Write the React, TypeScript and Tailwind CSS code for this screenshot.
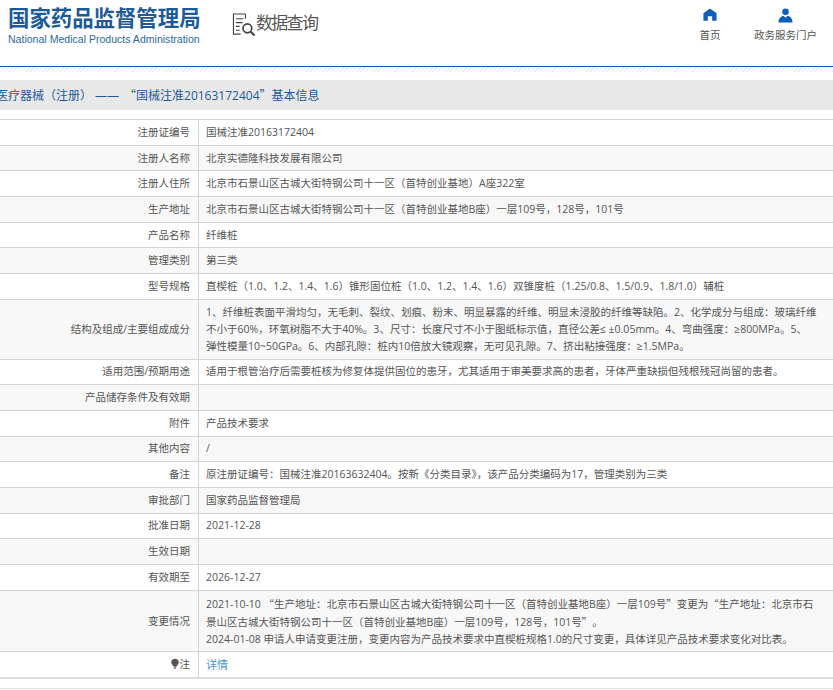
type Row = { label: string; value?: React.ReactNode[]; link?: boolean; bulb?: boolean };

function Q({ children }: { children: string }) {
  return <span className="inline-block [font-family:'Noto_Sans_CJK_SC',sans-serif]">{children}</span>;
}

const rows: Row[] = [
  { label: "注册证编号", value: ["国械注准20163172404"] },
  { label: "注册人名称", value: ["北京实德隆科技发展有限公司"] },
  { label: "注册人住所", value: ["北京市石景山区古城大街特钢公司十一区（首特创业基地）A座322室"] },
  { label: "生产地址", value: ["北京市石景山区古城大街特钢公司十一区（首特创业基地B座）一层109号，128号，101号"] },
  { label: "产品名称", value: ["纤维桩"] },
  { label: "管理类别", value: ["第三类"] },
  { label: "型号规格", value: ["直楔桩（1.0、1.2、1.4、1.6）锥形固位桩（1.0、1.2、1.4、1.6）双锥度桩（1.25/0.8、1.5/0.9、1.8/1.0）辅桩"] },
  {
    label: "结构及组成/主要组成成分",
    value: [
      "1、纤维桩表面平滑均匀，无毛刺、裂纹、划痕、粉末、明显暴露的纤维、明显未浸胶的纤维等缺陷。2、化学成分与组成：玻璃纤维",
      "不小于60%，环氧树脂不大于40%。3、尺寸：长度尺寸不小于图纸标示值，直径公差≤ ±0.05mm。4、弯曲强度：≥800MPa。5、",
      "弹性模量10~50GPa。6、内部孔隙：桩内10倍放大镜观察，无可见孔隙。7、挤出粘接强度：≥1.5MPa。",
    ],
  },
  { label: "适用范围/预期用途", value: ["适用于根管治疗后需要桩核为修复体提供固位的患牙，尤其适用于审美要求高的患者，牙体严重缺损但残根残冠尚留的患者。"] },
  { label: "产品储存条件及有效期" },
  { label: "附件", value: ["产品技术要求"] },
  { label: "其他内容", value: ["/"] },
  { label: "备注", value: ["原注册证编号：国械注准20163632404。按新《分类目录》，该产品分类编码为17，管理类别为三类"] },
  { label: "审批部门", value: ["国家药品监督管理局"] },
  { label: "批准日期", value: ["2021-12-28"] },
  { label: "生效日期" },
  { label: "有效期至", value: ["2026-12-27"] },
  {
    label: "变更情况",
    value: [
      <>
        2021-10-10 <Q>“</Q>生产地址：北京市石景山区古城大街特钢公司十一区（首特创业基地B座）一层109号<Q>”</Q>变更为<Q>“</Q>生产地址：北京市石
      </>,
      <>
        景山区古城大街特钢公司十一区（首特创业基地B座）一层109号，128号，101号<Q>”</Q>。
      </>,
      "2024-01-08 申请人申请变更注册，变更内容为产品技术要求中直楔桩规格1.0的尺寸变更，具体详见产品技术要求变化对比表。",
    ],
  },
  { label: "注", link: true, bulb: true },
];

function Bulb() {
  return (
    <svg width="8" height="12" viewBox="0 0 9 13" className="mr-[1px] inline-block align-[-2px]">
      <path d="M4.500 0.500C2 0.500 0.300 2.200 0.300 4.400c0 1.900 1.300 3 2.200 4.100l0.500 1h3l0.500-1c0.900-1.100 2.200-2.200 2.200-4.100C8.700 2.200 7 0.500 4.500 0.500z" fill="#555" />
      <rect x="3.200" y="10" width="2.600" height="2" fill="#888" />
    </svg>
  );
}

function InfoTable() {
  return (
    <div className="border-t border-[#d4d4d4] text-[10.5px] leading-[17px] text-[#555]">
      {rows.map((row, i) => (
        <div
          key={row.label}
          className={`flex min-h-[25.7px] border-b border-[#d4d4d4] last:h-[27px] last:border-b-2 last:border-[#dcdcdc] ${i % 2 === 1 ? "bg-[#f8f8f8]" : "bg-white"}`}
        >
          <div className="flex w-[199px] shrink-0 items-center justify-end border-r border-[#d4d4d4] px-2">
            <span>
              {row.bulb && <Bulb />}
              {row.label}
            </span>
          </div>
          <div className="flex flex-1 flex-col justify-center py-[3.85px] pl-[7px] pr-3">
            {row.link && <span className="text-[11px] text-[#4a90d9]">详情</span>}
            {row.value?.map((line, j) => (
              <div key={j} className="whitespace-nowrap">{line}</div>
            ))}
          </div>
        </div>
      ))}
    </div>
  );
}

function Header() {
  return (
    <div className="flex h-[67px] border-b border-[#1b5e9b]">
      <div className="ml-2 mt-[5px] w-[196px]">
        <div className="text-[21.4px] font-bold leading-[25px] text-[#1d5a97] whitespace-nowrap">国家药品监督管理局</div>
        <div className="mt-[3px] text-[10.55px] leading-3 text-[#2a6aa3] whitespace-nowrap [font-family:'Liberation_Sans',sans-serif]">National Medical Products Administration</div>
      </div>
      <div className="ml-7 mt-[13px] flex items-start">
        <svg width="25" height="24" viewBox="0 0 26 25" fill="none" stroke="#444">
          <path d="M14 1H1.500v21H9" strokeWidth="1.200" />
          <path d="M14 1v5M4 6h8M4 10h7M4 14h4M4 18h4" strokeWidth="1.200" />
          <circle cx="16" cy="16" r="4.600" strokeWidth="1.800" />
          <path d="M19.500 19.500l4 4" strokeWidth="2.200" />
        </svg>
        <span className="-ml-[1px] -mt-[2px] text-[17px] leading-6 tracking-[-1.7px] text-[#555] whitespace-nowrap">数据查询</span>
      </div>
      <div className="ml-auto mt-2 flex">
        <div className="flex w-[22px] flex-col items-center">
          <svg width="14" height="13" viewBox="0 0 16 14" fill="#0d5fb8">
            <path d="M8 0L0.500 5.500V14H5.500V9H10.500V14H15.500V5.500Z" />
          </svg>
          <span className="mt-[6px] text-[10.5px] leading-4 text-[#555] whitespace-nowrap">首页</span>
        </div>
        <div className="mr-4 ml-[33px] flex w-[63px] flex-col items-center">
          <svg width="15" height="15" viewBox="0 0 16 15" fill="#0d5fb8">
            <circle cx="8" cy="3.600" r="3.500" />
            <path d="M0.500 15c0-4.500 2.500-7 5.500-7L8 10l2-2c3 0 5.500 2.500 5.500 7z" />
          </svg>
          <span className="mt-[4px] text-[10.5px] leading-4 text-[#555] whitespace-nowrap">政务服务门户</span>
        </div>
      </div>
    </div>
  );
}

export default function App() {
  return (
    <div className="w-[833px] h-[690px] overflow-hidden bg-white [font-family:'Open_Sans','Noto_Sans_CJK_SC',sans-serif]">
      <Header />
      <div className="h-[5px] bg-[repeating-linear-gradient(135deg,#eeeeee_0,#eeeeee_1px,#ffffff_1px,#ffffff_3px)]" />
      <div className="mt-2 flex h-[30px] items-center overflow-hidden bg-[#e8e8e8] text-[12px] text-[#1d5a97] whitespace-nowrap">
        <span className="-ml-[4px]">医疗器械（注册）<span className="ml-[3px] mr-[5px]">——</span><Q>“</Q>国械注准20163172404<Q>”</Q>基本信息</span>
      </div>
      <div className="mt-[9px]">
        <InfoTable />
      </div>
      <div className="mt-[9px] border-b border-[#e4e4e4]" />
    </div>
  );
}
